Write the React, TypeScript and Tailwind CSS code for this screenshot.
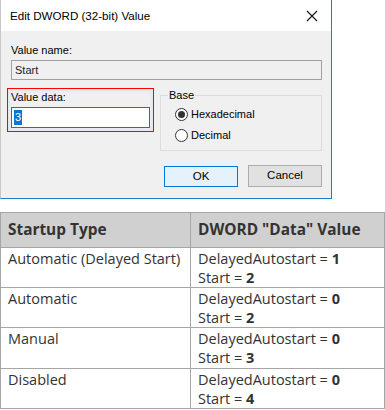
import React from "react";

const rows = [
  { type: "Automatic (Delayed Start)", d: "1", s: "2", h: "h-[39px]" },
  { type: "Automatic", d: "0", s: "2", h: "h-[38px]" },
  { type: "Manual", d: "0", s: "3", h: "h-[41px]" },
  { type: "Disabled", d: "0", s: "4", h: "h-[39px]" },
];

function Radio({ checked, label }: { checked: boolean; label: string }) {
  return (
    <div className="flex items-center h-[21px]">
      <div className="w-[13px] h-[13px] rounded-full border border-[#333] bg-white flex items-center justify-center">
        {checked && <div className="w-[7px] h-[7px] rounded-full bg-[#333]" />}
      </div>
      <span className="ml-[3px]">{label}</span>
    </div>
  );
}

export default function App() {
  return (
    <div className="w-[385px] h-[410px] bg-white overflow-hidden text-[#000]" style={{ fontFamily: '"Liberation Sans", Arial, sans-serif' }}>
      {/* Dialog */}
      <div className="w-[332px] h-[199px] border-r border-b border-[#1a7fd4] border-l border-l-[#c8c8c8] flex flex-col text-[11px]">
        <div className="h-[31px] bg-white flex items-center justify-between pl-[9px] pr-[9px]">
          <span className="text-[11.6px]">Edit DWORD (32-bit) Value</span>
          <svg width="12" height="12" viewBox="0 0 12 12" className="mr-[4px]">
            <path d="M1 1 L11 11 M11 1 L1 11" stroke="#111" strokeWidth="1.1" />
          </svg>
        </div>
        <div className="flex-1 bg-[#f0f0f0] pl-[10px] pr-[9px] flex flex-col">
          <div className="mt-[12px] leading-[14px]">Value name:</div>
          <div className="mt-[3px] h-[20px] border border-[#a0a0a0] bg-[#f0f0f0] flex items-center pl-[3px] text-[#222]">Start</div>
          <div className="mt-[8px] flex">
            <div className="ml-[-4px] w-[147px] h-[44px] border border-[#ff0000] pl-[3px] pr-[3px] shadow-[inset_0_0_6px_rgba(0,0,0,0.08)]">
              <div className="leading-[14px] mt-[1px]">Value data:</div>
              <div className="mt-[3px] h-[21px] w-[139px] border border-[#0078d7] bg-white flex items-center pl-[2px]">
                <span className="bg-[#0078d7] text-white leading-[15px] px-[1px]">3</span>
              </div>
            </div>
            <div className="ml-[6px] mt-[7px] w-[163px] h-[56px] border border-[#dcdcdc] relative pl-[14px] pt-[8px]">
              <span className="absolute left-[7px] top-[-8px] bg-[#f0f0f0] px-[1px] leading-[14px]">Base</span>
              <Radio checked label="Hexadecimal" />
              <Radio checked={false} label="Decimal" />
            </div>
          </div>
          <div className="mt-[15px] flex ml-[153px] gap-[10px]">
            <div className="w-[74px] h-[21px] border border-[#0078d7] bg-[#e5f1fb] flex items-center justify-center text-[11.5px]">OK</div>
            <div className="w-[74px] h-[22px] mt-[-1px] border border-[#adadad] bg-[#e1e1e1] flex items-center justify-center text-[11.5px]">Cancel</div>
          </div>
        </div>
      </div>

      {/* Table */}
      <table className="mt-[13px] w-[385px] border-collapse text-[#333] text-[14.5px]" style={{ fontFamily: '"Open Sans", "Noto Sans", sans-serif' }}>
        <thead>
          <tr className="bg-[#d0d0d0] h-[35px]">
            <th className="w-[190px] border border-[#a6a6a6] text-left font-bold pl-[7px] text-[15.4px]">Startup Type</th>
            <th className="border border-[#a6a6a6] text-left font-bold pl-[7px] text-[15.4px]">DWORD "Data" Value</th>
          </tr>
        </thead>
        <tbody>
          {rows.map((r) => (
            <tr key={r.type} className={r.h}>
              <td className="border border-[#a6a6a6] align-top pl-[7px] leading-[19px] pt-[1px]">{r.type}</td>
              <td className="border border-[#a6a6a6] align-top pl-[7px] leading-[19px] pt-[1px]">
                <div>DelayedAutostart = <b>{r.d}</b></div>
                <div>Start = <b>{r.s}</b></div>
              </td>
            </tr>
          ))}
        </tbody>
      </table>
    </div>
  );
}
